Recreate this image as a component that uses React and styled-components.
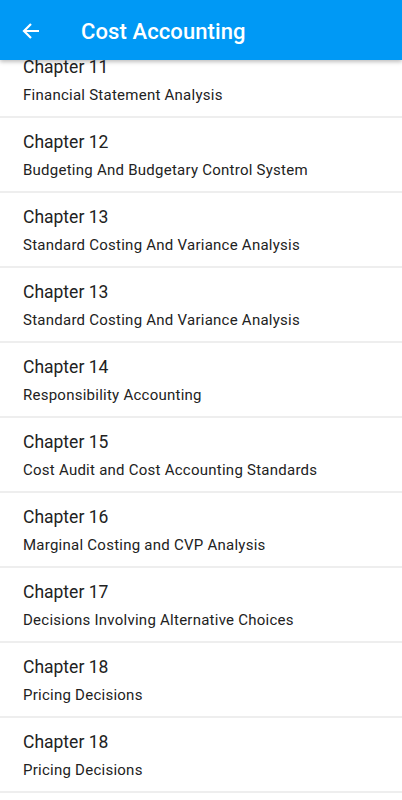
import React from "react";
import styled, { createGlobalStyle } from "styled-components";

const GlobalStyle = createGlobalStyle`
  html, body {
    margin: 0;
    padding: 0;
    background: #ffffff;
    font-family: Roboto, "Noto Sans", sans-serif;
  }
`;

const Screen = styled.div`
  width: 402px;
  height: 800px;
  display: flex;
  flex-direction: column;
  overflow: hidden;
  background: #fff;
`;

const AppBar = styled.header`
  position: relative;
  z-index: 2;
  height: 60px;
  flex-shrink: 0;
  display: flex;
  align-items: center;
  background: #0099f5;
  box-shadow: 0 2px 4px rgba(0, 0, 0, 0.25);
`;

const BackButton = styled.button`
  width: 64px;
  height: 60px;
  padding: 2px 0 0 21px;
  border: none;
  background: transparent;
  display: flex;
  align-items: center;
  cursor: pointer;
`;

const Title = styled.h1`
  margin: 2px 0 0 17px;
  color: #fff;
  font-size: 22px;
  font-weight: 500;
  letter-spacing: 0.1px;
`;

const List = styled.div`
  flex: 1;
  overflow: hidden;
`;

const Row = styled.div`
  height: 60px;
  padding: 13px 23px 0;
  border-bottom: 2px solid #eeeeee;
  display: flex;
  flex-direction: column;
  gap: 7px;
  margin-top: ${({ $offset }) => $offset || 0}px;
`;

const Heading = styled.div`
  font-size: 17.5px;
  color: #222222;
  line-height: 22px;
`;

const Subtitle = styled.div`
  font-size: 15px;
  color: #222222;
  line-height: 20px;
  letter-spacing: 0.25px;
`;

const chapters = [
  ["Chapter 11", "Financial Statement Analysis"],
  ["Chapter 12", "Budgeting And Budgetary Control System"],
  ["Chapter 13", "Standard Costing And Variance Analysis"],
  ["Chapter 13", "Standard Costing And Variance Analysis"],
  ["Chapter 14", "Responsibility Accounting"],
  ["Chapter 15", "Cost Audit and Cost Accounting Standards"],
  ["Chapter 16", "Marginal Costing and CVP Analysis"],
  ["Chapter 17", "Decisions Involving Alternative Choices"],
  ["Chapter 18", "Pricing Decisions"],
  ["Chapter 18", "Pricing Decisions"],
];

const App = () => {
  return (
    <Screen>
      <GlobalStyle />
      <AppBar>
        <BackButton aria-label="Back">
          <svg width="20" height="20" viewBox="0 0 20 20">
            <path
              d="M18 10H3M10 3L3 10L10 17"
              fill="none"
              stroke="#fff"
              strokeWidth="2.2"
            />
          </svg>
        </BackButton>
        <Title>Cost Accounting</Title>
      </AppBar>
      <List>
        {chapters.map(([h, s], i) => (
          <Row key={i} $offset={i === 0 ? -17 : 0}>
            <Heading>{h}</Heading>
            <Subtitle>{s}</Subtitle>
          </Row>
        ))}
      </List>
    </Screen>
  );
};

export default App;
